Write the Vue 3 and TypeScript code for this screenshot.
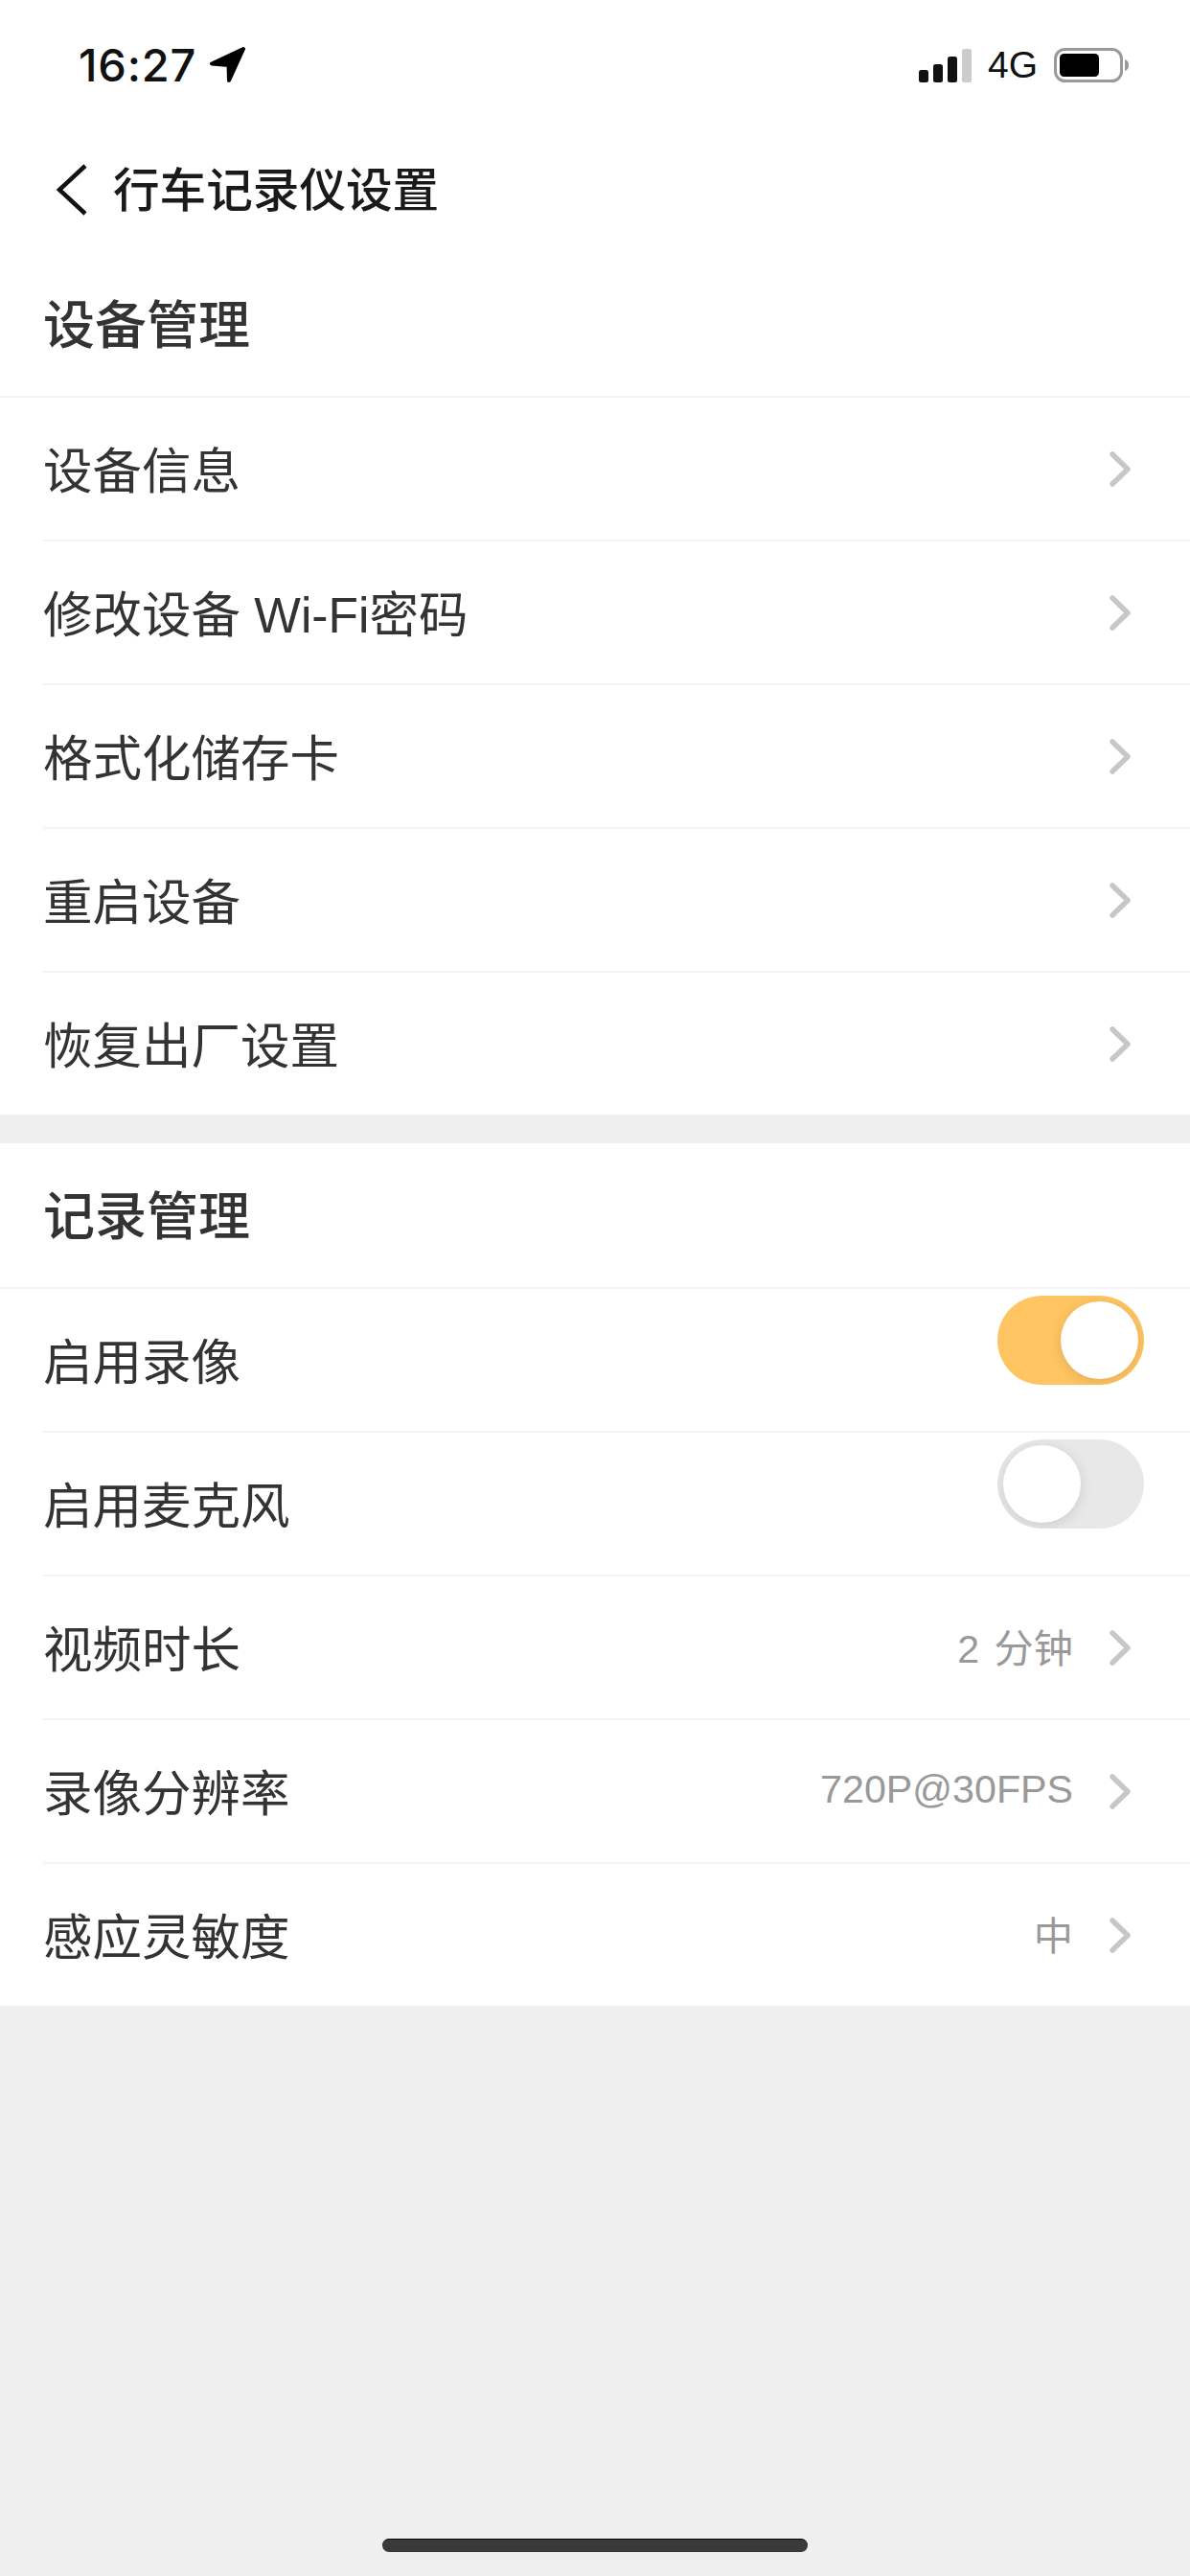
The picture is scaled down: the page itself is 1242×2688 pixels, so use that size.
<script setup lang="ts">
interface Row {
  label: string
  value?: string
  toggle?: 'on' | 'off'
}
const deviceRows: Row[] = [
  { label: '设备信息' },
  { label: '修改设备 Wi-Fi密码' },
  { label: '格式化储存卡' },
  { label: '重启设备' },
  { label: '恢复出厂设置' },
]
const recordRows: Row[] = [
  { label: '启用录像', toggle: 'on' },
  { label: '启用麦克风', toggle: 'off' },
  { label: '视频时长', value: '2 分钟' },
  { label: '录像分辨率', value: '720P@30FPS' },
  { label: '感应灵敏度', value: '中' },
]
const sections = [
  { title: '设备管理', rows: deviceRows },
  { title: '记录管理', rows: recordRows },
]
</script>

<template>
  <div class="page">
    <div class="top">
      <div class="status">
        <span class="time">16:27</span>
        <svg class="arrow" width="40" height="40" viewBox="0 0 40 40">
          <path d="M36 3 L3 18.5 L20.5 20 L21 36 Z" fill="#000" stroke="#000" stroke-width="4" stroke-linejoin="round" />
        </svg>
        <svg class="signal" width="55" height="36" viewBox="0 0 55 36">
          <rect x="0" y="23" width="10" height="13" rx="2.5" fill="#111" />
          <rect x="15" y="17" width="10" height="19" rx="2.5" fill="#111" />
          <rect x="30" y="9" width="10" height="27" rx="2.5" fill="#111" />
          <rect x="45" y="1" width="10" height="35" rx="2.5" fill="#ccc" />
        </svg>
        <span class="net">4G</span>
        <svg class="battery" width="78" height="36" viewBox="0 0 78 36">
          <rect x="1.5" y="1.5" width="69" height="33" rx="10" fill="none" stroke="#999" stroke-width="3" />
          <rect x="6" y="6" width="41" height="24" rx="4.5" fill="#000" />
          <path d="M74 12 C77 13 78 15 78 18 C78 21 77 23 74 24 Z" fill="#999" />
        </svg>
      </div>
      <div class="nav">
        <svg class="back" width="34" height="54" viewBox="0 0 34 54">
          <path d="M31 2 L4 27 L31 52" fill="none" stroke="#111" stroke-width="4.5" />
        </svg>
        <span class="nav-title">行车记录仪设置</span>
      </div>
    </div>

    <section v-for="s in sections" :key="s.title" class="section">
      <h2 class="head">{{ s.title }}</h2>
      <div v-for="r in s.rows" :key="r.label" class="row">
        <span class="label">{{ r.label }}</span>
        <div v-if="r.toggle" class="switch" :class="r.toggle">
          <span class="knob"></span>
        </div>
        <template v-else>
          <span v-if="r.value" class="value">{{ r.value }}</span>
          <svg class="chev" width="23" height="37" viewBox="0 0 23 37">
            <path d="M3 3 L19 18.5 L3 34" fill="none" stroke="#c7c7c7" stroke-width="5.5" stroke-linecap="round" stroke-linejoin="round" />
          </svg>
        </template>
      </div>
    </section>

    <div class="home"></div>
  </div>
</template>

<style scoped>
.page {
  position: relative;
  width: 1242px;
  height: 2688px;
  overflow: hidden;
  background: #efefef;
  font-family: "Liberation Sans", "Noto Sans CJK SC", sans-serif;
  color: #333;
}
.top {
  background: #fff;
}
.status {
  height: 132px;
  display: flex;
  align-items: center;
  padding: 3px 64px 0 82px;
  box-sizing: border-box;
}
.time {
  font-family: Inter, "Liberation Sans", sans-serif;
  font-size: 47px;
  font-weight: 500;
  color: #111;
  letter-spacing: 0.8px;
}
.arrow {
  margin-left: 13px;
}
.signal {
  margin-left: auto;
}
.net {
  margin-left: 17px;
  font-size: 39px;
  color: #111;
}
.battery {
  margin-left: 17px;
}
.nav {
  height: 131px;
  display: flex;
  align-items: center;
  padding-left: 58px;
}
.nav-title {
  margin: 0 0 5px 26px;
  font-size: 48.6px;
  font-weight: 500;
  color: #1a1a1a;
  font-family: "Noto Sans CJK SC", sans-serif;
}
.section {
  background: #fff;
  margin-bottom: 30px;
}
.head {
  margin: 0;
  height: 150px;
  box-sizing: border-box;
  padding: 0 0 5px 45px;
  display: flex;
  align-items: center;
  font-size: 54px;
  font-weight: 500;
  color: #333;
  font-family: "Noto Sans CJK SC", sans-serif;
}
.row {
  height: 150px;
  box-sizing: border-box;
  border-top: 2px solid #f4f4f4;
  margin-left: 45px;
  padding-bottom: 4px;
  display: flex;
  align-items: center;
}
.head + .row {
  margin-left: 0;
  padding-left: 45px;
}
.label {
  flex: 1;
  font-size: 51.5px;
  color: #333;
}
.value {
  font-size: 41.2px;
  color: #999;
  margin-right: 38px;
  word-spacing: 4px;
}
.chev {
  margin: 4px 61px 0 0;
}
.switch {
  align-self: flex-start;
  margin: 7px 48px 0 0;
  width: 153px;
  height: 93px;
  border-radius: 47px;
  box-sizing: border-box;
  padding: 6px;
  display: flex;
  overflow: hidden;
}
.switch.on {
  background: #ffc562;
  justify-content: flex-end;
}
.switch.off {
  background: #e8e8e8;
  justify-content: flex-start;
}
.knob {
  width: 81px;
  height: 81px;
  border-radius: 50%;
  background: #fff;
  box-shadow: 0 3px 14px rgba(0, 0, 0, 0.12);
}
.home {
  position: absolute;
  left: 399px;
  top: 2649px;
  width: 444px;
  height: 14px;
  border-radius: 7px;
  background: #3a3a3a;
  border-top: 1px solid #000;
  box-sizing: border-box;
}
</style>
